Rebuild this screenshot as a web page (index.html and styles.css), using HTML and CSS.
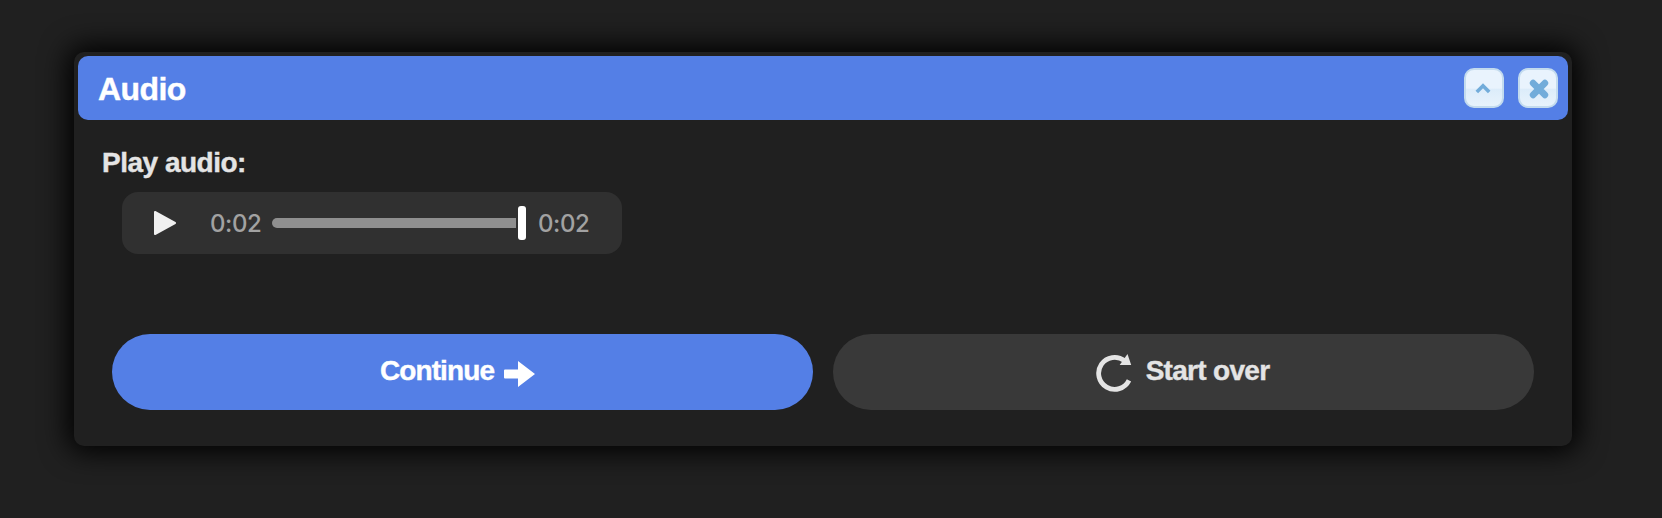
FILE: index.html
```
<!DOCTYPE html>
<html lang="en">
<head>
    <meta charset="UTF-8">
    <meta name="viewport" content="width=device-width, initial-scale=1.0">
    <title>Audio</title>
    <link rel="stylesheet" href="styles.css">
</head>
<body>
    <div class="window">
        <header class="titlebar">
            <h1>Audio</h1>
            <div class="window-controls">
                <button type="button" class="control-btn" aria-label="Collapse">
                    <svg width="36" height="36" viewBox="0 0 36 36">
                        <path d="M10.8 22 17 15.8 23.2 22" fill="none" stroke="#72acda" stroke-width="3.6"/>
                    </svg>
                </button>
                <button type="button" class="control-btn" aria-label="Close">
                    <svg width="36" height="36" viewBox="0 0 36 36">
                        <path d="M13.1 13.1 24.9 24.9M24.9 13.1 13.1 24.9" fill="none" stroke="#72acda" stroke-width="6.6" stroke-linecap="round"/>
                    </svg>
                </button>
            </div>
        </header>

        <main>
            <p class="label">Play audio:</p>

            <div class="player">
                <button type="button" class="play-btn" aria-label="Play">
                    <svg width="22" height="24" viewBox="0 0 22 24">
                        <path d="M1 1 21 12 1 23Z" fill="#f0f0f0" stroke="#f0f0f0" stroke-width="2" stroke-linejoin="round"/>
                    </svg>
                </button>
                <span class="time">0:02</span>
                <div class="track">
                    <div class="progress"></div>
                    <div class="thumb"></div>
                </div>
                <span class="time">0:02</span>
            </div>

            <div class="actions">
                <button type="button" class="btn primary">
                    <span>Continue</span>
                    <svg class="arrow" width="31" height="26" viewBox="0 0 31 26">
                        <path d="M1 8.5H14V0L31 13 14 26V17.5H1Q0 17.5 0 16.5V9.5Q0 8.5 1 8.5Z" fill="#fff"/>
                    </svg>
                </button>
                <button type="button" class="btn secondary">
                    <svg class="restart" width="36" height="38" viewBox="0 0 36 38">
                        <path d="M33 26.4A16 16 0 1 1 28.5 6.7" fill="none" stroke="#e4e4e4" stroke-width="4.8"/>
                        <path d="M31.5 0 35.2 11H23.7Z" fill="#e4e4e4"/>
                    </svg>
                    <span>Start over</span>
                </button>
            </div>
        </main>
    </div>
</body>
</html>
```
FILE: styles.css
```
:root {
    --accent: #547fe6;
    --bg: #202020;
    --text: #e4e4e4;
}

* {
    margin: 0;
    padding: 0;
    box-sizing: border-box;
}

body {
    font-family: 'Liberation Sans', Arial, sans-serif;
    color: var(--text);
    background: var(--bg);
    min-height: 100vh;
    overflow: hidden;
}

button {
    border: none;
    background: none;
    font: inherit;
    color: inherit;
    cursor: pointer;
}

svg {
    display: block;
}

h1,
.label,
.btn {
    -webkit-text-stroke: 0.4px;
}

.window {
    width: 1498px;
    height: 394px;
    margin: 52px 0 0 74px;
    padding: 4px;
    background: var(--bg);
    border-radius: 10px;
    box-shadow: 0 0 28px 6px #000;
}

.titlebar {
    display: flex;
    align-items: center;
    justify-content: space-between;
    height: 64px;
    padding: 0 10px 0 20px;
    background: var(--accent);
    border-radius: 10px;
}

h1 {
    font-size: 32px;
    line-height: 36px;
    letter-spacing: -0.6px;
    color: #fff;
    padding-top: 2px;
}

.window-controls {
    display: flex;
    gap: 14px;
}

.control-btn {
    width: 40px;
    height: 40px;
    border: 2px solid #c3dbee;
    border-radius: 10px;
    background: linear-gradient(#e9f3fd 50%, #dcecfa 54%, #e8f3fc);
}

main {
    padding: 26px 34px 0;
}

.label {
    margin-left: -10px;
    font-size: 28px;
    font-weight: bold;
    line-height: 34px;
    letter-spacing: -0.5px;
}

.player {
    display: flex;
    align-items: center;
    width: 500px;
    height: 62px;
    margin: 12px 0 0 10px;
    padding: 0 33px 0 32px;
    background: #303030;
    border-radius: 16px;
}

.play-btn {
    margin-right: 34px;
}

.time {
    width: 51px;
    font-family: Inter, sans-serif;
    font-size: 24px;
    font-weight: 500;
    letter-spacing: -0.4px;
    color: #a2a2a2;
    white-space: nowrap;
}

.track {
    display: flex;
    align-items: center;
    flex: 1;
    gap: 2px;
    margin: 0 12px 0 11px;
}

.progress {
    flex: 1;
    height: 10px;
    background: #8f8f8f;
    border-radius: 5px 0 0 5px;
}

.thumb {
    width: 8px;
    height: 34px;
    background: #fff;
    border-radius: 3px;
}

.actions {
    display: grid;
    grid-template-columns: 1fr 1fr;
    gap: 20px;
    margin-top: 80px;
}

.btn {
    display: flex;
    align-items: center;
    justify-content: center;
    height: 76px;
    border-radius: 38px;
    font-size: 28px;
    font-weight: bold;
    letter-spacing: -0.8px;
}

.btn span {
    line-height: 32px;
    padding-bottom: 2px;
}

.primary {
    gap: 10px;
    padding-right: 10px;
    background: var(--accent);
    color: #fff;
    letter-spacing: -0.9px;
}

.arrow {
    margin-top: 3px;
}

.secondary {
    gap: 14px;
    padding-right: 2px;
    background: #393939;
    letter-spacing: -0.7px;
}

.restart {
    margin-top: 1px;
}
```
